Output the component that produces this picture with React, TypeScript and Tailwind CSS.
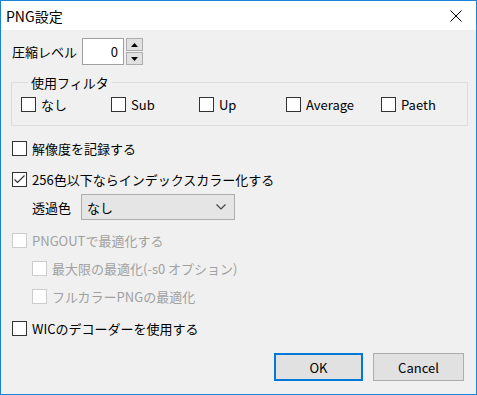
import type { ReactNode } from "react"

const font = { fontFamily: '"Noto Sans CJK JP", "Noto Sans", sans-serif' }

function Box({ checked = false, disabled = false }: { checked?: boolean; disabled?: boolean }) {
  return (
    <span
      className={`flex h-[15px] w-[15px] shrink-0 items-center justify-center border bg-white ${
        disabled ? "border-[#cccccc]" : "border-[#333333]"
      }`}
    >
      {checked && (
        <svg width="13" height="13" viewBox="0 0 13 13">
          <path d="M1.5 6.5 L4.5 9.5 L11.5 2.5" fill="none" stroke="#333" strokeWidth="1.2" />
        </svg>
      )}
    </span>
  )
}

function Check({
  children,
  checked,
  disabled,
  className = "",
}: {
  children: ReactNode
  checked?: boolean
  disabled?: boolean
  className?: string
}) {
  return (
    <div className={`flex h-[20px] items-center gap-[5px] ${className}`}>
      <Box checked={checked} disabled={disabled} />
      <span className={disabled ? "text-[#a0a0a0]" : "text-black"}>{children}</span>
    </div>
  )
}

export default function App() {
  return (
    <div
      className="flex h-[395px] w-[477px] flex-col border border-[#1883d7] bg-[#f0f0f0] text-[13px] leading-none text-black"
      style={font}
    >
      {/* title bar */}
      <div className="flex h-[29px] shrink-0 items-center justify-between bg-white pl-[5px] pr-[14px]">
        <span className="text-[14px]">PNG設定</span>
        <svg width="12" height="12" viewBox="0 0 12 12">
          <path d="M0.5 0.5 L11.5 11.5 M11.5 0.5 L0.5 11.5" stroke="#000" strokeWidth="1" />
        </svg>
      </div>

      <div className="flex flex-1 flex-col pl-[10px] pr-[8px]">
        {/* compression level */}
        <div className="mt-[8px] flex h-[27px] items-center pl-px">
          <span>圧縮レベル</span>
          <div className="ml-[5px] flex h-[27px] w-[42px] items-center justify-end border border-[#a0a0a0] bg-white pr-[5px]">
            0
          </div>
          <div className="ml-[2px] flex h-[27px] w-[17px] flex-col gap-px">
            <div className="flex flex-1 items-center justify-center border border-[#adadad] bg-[#e1e1e1]">
              <svg width="7" height="4" viewBox="0 0 7 4">
                <path d="M0 4 L3.5 0 L7 4 Z" fill="#000" />
              </svg>
            </div>
            <div className="flex flex-1 items-center justify-center border border-[#adadad] bg-[#e1e1e1]">
              <svg width="7" height="4" viewBox="0 0 7 4">
                <path d="M0 0 L3.5 4 L7 0 Z" fill="#000" />
              </svg>
            </div>
          </div>
        </div>

        {/* filter group */}
        <fieldset className="mt-[9px] border border-[#dcdcdc] pb-[11px] pl-[9px]">
          <legend className="ml-[7px] px-[3px] leading-[17px]">使用フィルタ</legend>
          <div className="mt-[3px] flex">
            <Check className="w-[90px]">なし</Check>
            <Check className="w-[88px]">Sub</Check>
            <Check className="w-[87px]">Up</Check>
            <Check className="w-[95px]">Average</Check>
            <Check>Paeth</Check>
          </div>
        </fieldset>

        <Check className="mt-[12px] pl-px">解像度を記録する</Check>
        <Check className="mt-[11px] pl-px" checked>
          256色以下ならインデックスカラー化する
        </Check>

        {/* transparent colour */}
        <div className="mt-[5px] flex h-[26px] items-center pl-[21px]">
          <span>透過色</span>
          <div className="ml-[10px] flex h-[26px] w-[154px] items-center justify-between border border-[#adadad] bg-[#e5e5e5] pl-[5px] pr-[8px]">
            <span>なし</span>
            <svg width="10" height="6" viewBox="0 0 10 6">
              <path d="M0.5 0.5 L5 5 L9.5 0.5" fill="none" stroke="#444" strokeWidth="1.2" />
            </svg>
          </div>
        </div>

        <Check className="mt-[10px] pl-px" disabled>
          PNGOUTで最適化する
        </Check>
        <Check className="mt-[8px] pl-[21px]" disabled>
          最大限の最適化(-s0 オプション)
        </Check>
        <Check className="mt-[8px] pl-[21px]" disabled>
          フルカラーPNGの最適化
        </Check>
        <Check className="mt-[12px] pl-px">WICのデコーダーを使用する</Check>

        {/* buttons */}
        <div className="mt-[15px] flex justify-end gap-[10px] pr-[4px]">
          <button className="flex h-[28px] w-[89px] items-center justify-center border-2 border-[#0078d7] bg-[#e1e1e1]">
            OK
          </button>
          <button className="flex h-[28px] w-[91px] items-center justify-center border border-[#adadad] bg-[#e1e1e1]">
            Cancel
          </button>
        </div>
      </div>
    </div>
  )
}
